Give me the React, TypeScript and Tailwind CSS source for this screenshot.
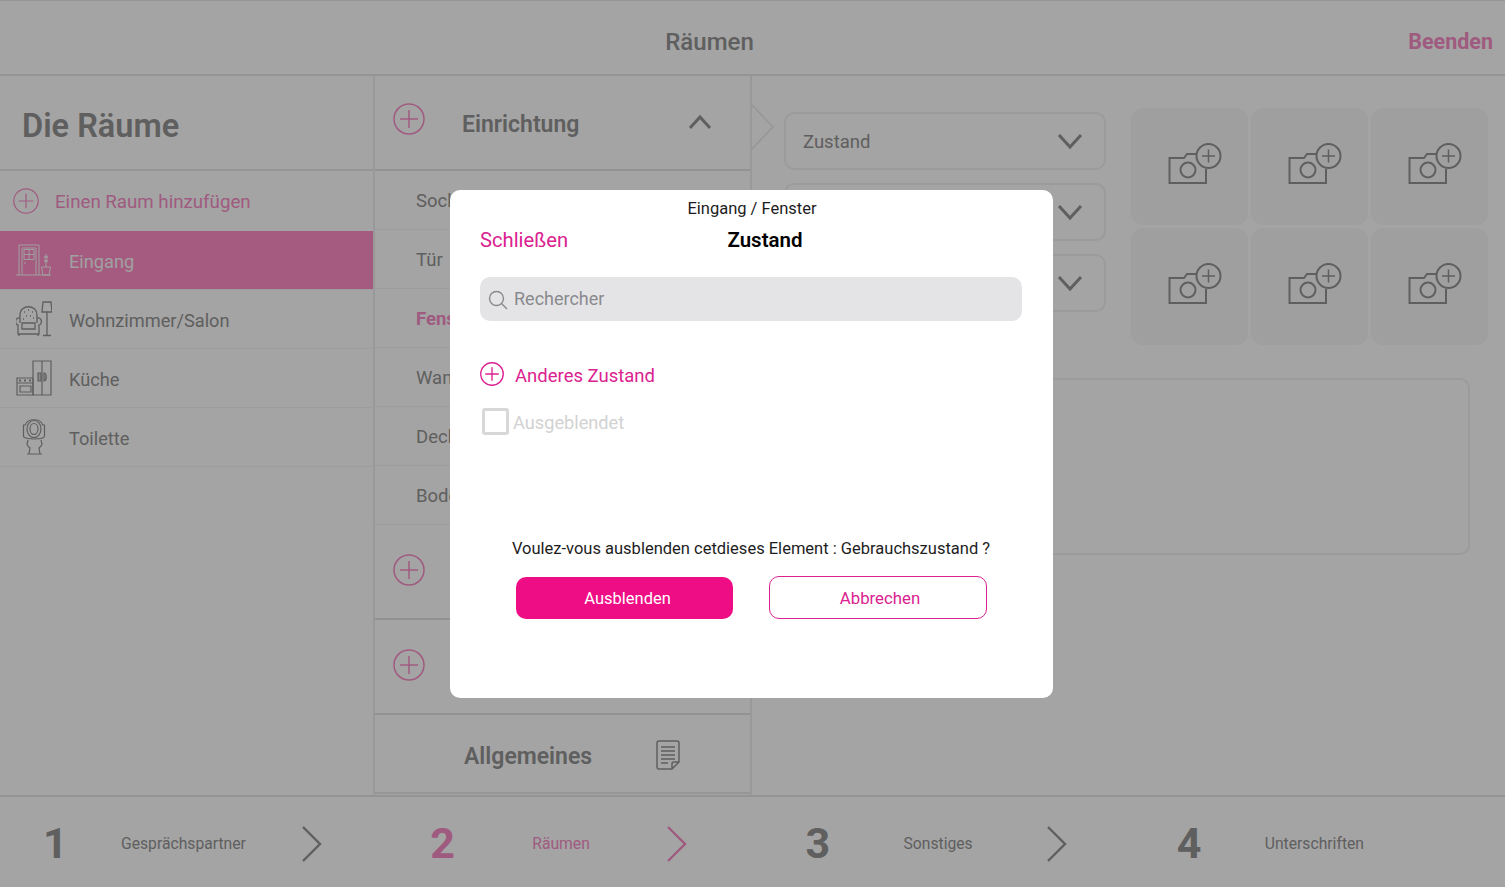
import React from "react";

const PlusCircle = ({ size = 32, cls = "text-[#f58cc4]", sw = 1.5 }: { size?: number; cls?: string; sw?: number }) => (
  <svg width={size} height={size} viewBox="0 0 32 32" fill="none" stroke="currentColor" strokeWidth={sw} className={cls + " shrink-0"}>
    <circle cx="16" cy="16" r="15" />
    <path d="M16 7v18M7 16h18" />
  </svg>
);

const Chevron = ({ up = false }: { up?: boolean }) => (
  <svg width="26" height="18" viewBox="0 0 26 18" fill="none" stroke="#929292" strokeWidth="3" className="shrink-0">
    <path d={up ? "M3 15 13 4l10 11" : "M2 3l11 12L24 3"} />
  </svg>
);

const StepArrow = ({ cls }: { cls: string }) => (
  <svg width="22" height="36" viewBox="0 0 22 36" fill="none" stroke="currentColor" strokeWidth="2.400" className={cls + " shrink-0"}>
    <path d="M2 1l17 17L2 35" />
  </svg>
);

const Camera = () => (
  <svg width="54" height="42" viewBox="0 0 54 42" fill="none" stroke="#929292" strokeWidth="2">
    <path d="M28 11h-9l-3 4H1.500v25h36.500V26" />
    <circle cx="20" cy="27" r="7.500" />
    <circle cx="40.500" cy="13" r="12" />
    <path d="M40.500 6.500v13M34 13h13" strokeWidth="1.500" />
  </svg>
);

const DoorIcon = ({ c }: { c: string }) => (
  <svg width="36" height="32" viewBox="0 0 36 32" fill="none" stroke={c} strokeWidth="1">
    <path d="M0 31h35M3 31V1h20v30M6 31V4h14v27" />
    <path d="M8 5.500h10v10H8zM13 5.500v10M8 10.500h10M8 19h2" />
    <path d="M30 10v13M28 12l4 2M32 12l-4 2M28 16l4 2M32 16l-4 2M25.500 23h9l-1.500 8h-6z" />
  </svg>
);

const ChairIcon = ({ c }: { c: string }) => (
  <svg width="36" height="36" viewBox="0 0 36 36" fill="none" stroke={c} strokeWidth="1.300">
    <path d="M4 22V14C4 3 21 3 21 14V22" />
    <path d="M4 17c-6-1-5 7-2 7v9h21v-9c3 0 4-8-2-7M6 22h13v6H6zM3 33v2M22 33v2" />
    <path d="M8 11h1M12 9h1M16 11h1M10 15h1M14 15h1M17 17h1M7 18h1" strokeDasharray="1 2" />
    <path d="M27 1h8l1 10H26zM31 11v23M27 34.500h8" />
  </svg>
);

const KitchenIcon = ({ c }: { c: string }) => (
  <svg width="36" height="36" viewBox="0 0 36 36" fill="none" stroke={c} strokeWidth="1.200">
    <path d="M17 1h18v34H17zM26 1v34" />
    <path d="M22 13h3v8h-3zM28 13c3 0 3 8 0 8z" fill={c} fillOpacity="0.4" />
    <path d="M1 18h16v17H1zM1 23h16M4 26h11v6H4z" />
    <path d="M3 20.500h2M8 20.500h2M13 20.500h2" strokeWidth="2" />
  </svg>
);

const ToiletIcon = ({ c }: { c: string }) => (
  <svg width="24" height="36" viewBox="0 0 24 36" fill="none" stroke={c} strokeWidth="1.200">
    <path d="M1.500 6h2c1-7 16-7 17 0h2v11c0 4-21 4-21 0zM6 21l-1 4c0 2 2 3 3 4l-1 6h11l-1-6c1-1 3-2 3-4l-1-4M5 35h15" />
    <ellipse cx="12" cy="10" rx="7" ry="8.500" />
    <ellipse cx="12" cy="10" rx="4" ry="5.500" />
  </svg>
);

const NoteIcon = () => (
  <svg width="24" height="30" viewBox="0 0 24 30" fill="none" stroke="#929292" strokeWidth="1.500">
    <path d="M16 29H3a2 2 0 0 1-2-2V3a2 2 0 0 1 2-2h18a2 2 0 0 1 2 2v19zM16 29v-5a2 2 0 0 1 2-2h5" />
    <path d="M5 7h14M5 11h14M5 15h14M5 19h14M5 23h7" />
  </svg>
);

const rooms = [
  { name: "Eingang", Icon: DoorIcon, active: true },
  { name: "Wohnzimmer/Salon", Icon: ChairIcon },
  { name: "Küche", Icon: KitchenIcon },
  { name: "Toilette", Icon: ToiletIcon },
];

const items = ["Sockel", "Tür", "Fenster", "Wand", "Decke", "Boden"];

const steps = [
  { n: "1", label: "Gesprächspartner", a: "ml-[43px] w-[78px]", b: "w-[180px]", pink: false },
  { n: "2", label: "Räumen", a: "ml-[54px] w-[102px]", b: "w-[134px]", pink: true },
  { n: "3", label: "Sonstiges", a: "ml-[53px] w-[98px]", b: "w-[142px]", pink: false },
  { n: "4", label: "Unterschriften", a: "ml-[48px] w-[88px]", b: "", pink: false },
];

export default function App() {
  return (
    <div className="relative w-[1505px] h-[887px] overflow-hidden bg-[#fcfcfc] font-['Roboto',sans-serif] text-[#929292]">
      <header className="h-[76px] flex items-center justify-center relative border-b-2 border-[#e3e3e3] border-t border-t-[#e3e3e3]">
        <span className="text-[24px] font-medium mr-[86px] pt-[9px]">Räumen</span>
        <span className="absolute right-[12px] top-[28px] text-[21.500px] font-bold text-[#f58cc4] leading-[26px]">Beenden</span>
      </header>

      <div className="flex h-[719px]">
        <aside className="w-[375px] shrink-0 border-r-2 border-[#ececec]">
          <div className="h-[95px] flex items-center pl-[22px] pt-[7px] border-b-2 border-[#e3e3e3]">
            <h1 className="text-[32.500px] font-semibold leading-none">Die Räume</h1>
          </div>
          <div className="h-[60px] flex items-center pl-[13px] gap-[16px] text-[#f58cc4]">
            <PlusCircle size={26} />
            <span className="text-[18.700px] pt-[3px]">Einen Raum hinzufügen</span>
          </div>
          {rooms.map(({ name, Icon, active }) => (
            <div
              key={name}
              className={
                "h-[59px] flex items-center pl-[16px] border-b border-[#f2f2f2] " +
                (active ? "bg-[#fe8bc5] text-[#f6f6f6]" : "")
              }
            >
              <div className="w-[36px] h-[36px] flex items-center justify-center">
                <Icon c={active ? "#f5f5f5" : "#929292"} />
              </div>
              <span className="ml-[17px] text-[18.200px] pt-[3px]">{name}</span>
            </div>
          ))}
        </aside>

        <section className="w-[377px] shrink-0 flex flex-col border-r-2 border-[#ececec]">
          <div className="h-[95px] flex items-center pl-[18px] pr-[37px] border-b-2 border-[#e0e0e0]">
            <PlusCircle size={32} cls="text-[#f58cc4] mb-[8px]" />
            <span className="ml-[37px] text-[23px] font-semibold pt-[6px]">Einrichtung</span>
            <span className="ml-auto mb-[1px]"><Chevron up /></span>
          </div>
          {items.map((t, i) => (
            <div
              key={t}
              className={
                "h-[59px] flex items-center pl-[41px] pt-[3px] text-[18.500px] border-b border-[#f2f2f2] " +
                (t === "Fenster" ? "font-bold text-[#f58cc4]" : "")
              }
            >
              {t}
              {i === 0 && <span className="ml-auto mr-[31px] w-[20px] h-[20px] border-2 border-[#929292] rounded-[3px]" />}
            </div>
          ))}
          {[0, 1].map((i) => (
            <div key={i} className="h-[95px] flex items-center pl-[18px] border-b-2 border-[#e0e0e0]">
              <PlusCircle size={32} cls="text-[#f58cc4] mb-[4px]" />
            </div>
          ))}
          <div className="h-[79px] flex items-center pl-[89px] border-b-2 border-[#e6e6e6]">
            <span className="text-[23px] font-semibold pt-[7px]">Allgemeines</span>
            <span className="ml-[64px] pt-[2px]"><NoteIcon /></span>
          </div>
        </section>

        <main className="flex-1 relative pl-[32px] pr-[17px] pt-[32px]">
          <svg width="26" height="48" viewBox="0 0 26 48" fill="none" stroke="#e6e6e6" strokeWidth="1.500" className="absolute left-[-2px] top-[27px]">
            <path d="M1 1l22 23L1 47" />
          </svg>
          <div className="flex gap-[25px]">
            <div className="w-[322px] flex flex-col gap-[13px] pt-[4px]">
              {["Zustand", "", ""].map((t, i) => (
                <div key={i} className="h-[58px] border-2 border-[#eeeeee] rounded-[10px] flex items-center justify-between pl-[17px] pr-[21px] text-[18.500px]">
                  <span className="pt-[4px]">{t}</span>
                  <Chevron />
                </div>
              ))}
            </div>
            <div className="grid grid-cols-3 gap-[3px]">
              {[0, 1, 2, 3, 4, 5].map((i) => (
                <div key={i} className="w-[117px] h-[117px] rounded-[12px] bg-[#f5f5f5] flex items-center justify-center pl-[10px] pb-[6px]">
                  <Camera />
                </div>
              ))}
            </div>
          </div>
          <div className="w-[686px] h-[177px] mt-[33px] border-2 border-[#eeeeee] rounded-[10px]" />
        </main>
      </div>

      <footer className="h-[92px] pt-[3px] border-t-2 border-[#e3e3e3] grid grid-cols-4">
        {steps.map((s) => (
          <div key={s.n} className={"flex items-center " + (s.pink ? "text-[#f58cc4]" : "")}>
            <span className={"text-[43px] font-bold leading-none " + s.a}>{s.n}</span>
            <span className={"text-[15.700px] " + s.b}>{s.label}</span>
            {s.n !== "4" && <StepArrow cls={s.pink ? "text-[#f58cc4]" : "text-[#929292]"} />}
          </div>
        ))}
      </footer>

      <div className="absolute inset-0 bg-black/35 z-10" />

      <div className="absolute z-20 left-[450px] top-[190px] w-[603px] h-[508px] bg-white rounded-[10px] pl-[30px] pr-[31px] text-[#1d1d1d]">
        <div className="text-center text-[16.500px] leading-[20px] mt-[8px] pt-[1px] translate-x-[1px]">Eingang / Fenster</div>
        <div className="relative h-[26px] mt-[8px] flex items-center justify-center">
          <button className="absolute left-0 text-[20.200px] leading-[26px] text-[#da2290]">Schließen</button>
          <span className="text-[20.500px] font-semibold text-black translate-x-[14px]">Zustand</span>
        </div>
        <div className="h-[44px] mt-[24px] rounded-[10px] bg-[#e4e4e6] flex items-center pl-[8px] gap-[6px] text-[#8a8a8e] text-[18px]">
          <svg width="20" height="20" viewBox="0 0 20 20" fill="none" stroke="#8a8a8e" strokeWidth="1.400" className="mt-[2px]">
            <circle cx="8.500" cy="8.500" r="7" />
            <path d="M13.500 13.500l5.500 5.500" />
          </svg>
          <span className="mb-[2px]">Rechercher</span>
        </div>
        <div className="flex items-center mt-[41px] gap-[11px] h-[24px] text-[#da2290]">
          <PlusCircle size={24} sw={1.800} cls="text-[#da2290]" />
          <span className="text-[18.500px] mt-[5px]">Anderes Zustand</span>
        </div>
        <div className="flex items-center mt-[20px] ml-[2px] gap-[4px] text-[#d2d2d2]">
          <span className="w-[27px] h-[27px] border-[3px] border-[#d8d8d8] rounded-[3px]" />
          <span className="text-[18.200px] mt-[3px]">Ausgeblendet</span>
        </div>
        <p className="mt-[102px] text-center text-[16.500px] leading-[22px]">Voulez-vous ausblenden cetdieses Element : Gebrauchszustand ?</p>
        <div className="flex mt-[16px] ml-[36px] gap-[36px] items-start">
          <button className="w-[217px] h-[42px] mt-[1px] pl-[6px] pt-[2px] rounded-[10px] bg-[#ef0d85] text-white text-[16.500px]">Ausblenden</button>
          <button className="w-[218px] h-[43px] pl-[4px] pt-[2px] rounded-[10px] border border-[#da2290] text-[#da2290] text-[16.800px]">Abbrechen</button>
        </div>
      </div>
    </div>
  );
}
